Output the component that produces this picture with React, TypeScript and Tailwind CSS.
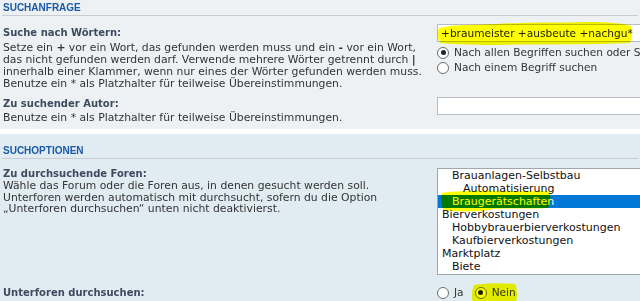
import React from 'react';

const forums = [
  { name: 'Brauanlagen-Selbstbau', level: 1 },
  { name: 'Automatisierung', level: 2 },
  { name: 'Braugerätschaften', level: 1, selected: true },
  { name: 'Bierverkostungen', level: 0 },
  { name: 'Hobbybrauerbierverkostungen', level: 1 },
  { name: 'Kaufbierverkostungen', level: 1 },
  { name: 'Marktplatz', level: 0 },
  { name: 'Biete', level: 1 }
];

const indent = ['pl-[4px]', 'pl-[14px]', 'pl-[25px]'];

const Radio = ({ checked }: { checked?: boolean }) => (
  <span className="relative inline-flex h-[12px] w-[12px] shrink-0 items-center justify-center rounded-full border border-[#6b6b6b] bg-white">
    {checked && <span className="h-[5px] w-[5px] rounded-full bg-[#222]" />}
  </span>
);

const Heading = ({ children }: { children: React.ReactNode }) => (
  <h3 className="mx-[2px] border-b border-[#c9cdd1] pb-[1px] pl-[1px] font-['Liberation_Sans',sans-serif] text-[10px] font-bold uppercase leading-[12px] text-[#1a5aa6]">
    {children}
  </h3>
);

const App = () => {
  return (
    <div className="h-[301px] w-[640px] overflow-hidden bg-[#e1ebf2] font-['DejaVu_Sans',Verdana,sans-serif] text-[#333]">
      {/* Suchanfrage */}
      <div className="h-[129px] bg-[#edf1f4] pt-[2px]">
        <Heading>Suchanfrage</Heading>
        <div className="mt-[11px] flex">
          <div className="w-[437px] shrink-0 whitespace-nowrap pl-[3px] text-[10.8px] leading-[12px]">
            <div className="text-[10px] font-bold text-[#3d4b5f]">Suche nach Wörtern:</div>
            <div className="mt-[3px]">
              Setze ein <b>+</b> vor ein Wort, das gefunden werden muss und ein <b>-</b> vor ein Wort,
              <br />
              das nicht gefunden werden darf. Verwende mehrere Wörter getrennt durch <b>|</b>
              <br />
              innerhalb einer Klammer, wenn nur eines der Wörter gefunden werden muss.
              <br />
              Benutze ein * als Platzhalter für teilweise Übereinstimmungen.
            </div>
          </div>
          <div className="relative -mt-[3px] flex-1 text-[10.6px]">
            <div className="h-[18px] w-[260px] border border-[#b6bcc2] bg-white pl-[3px] leading-[16px] text-[#222]">
              +braumeister +ausbeute +nachgu*
            </div>
            <svg className="pointer-events-none absolute -top-[4px] left-[0px] mix-blend-multiply" width="198" height="26" viewBox="0 0 198 26">
              <path d="M2 8 C 20 4, 40 5, 60 4 C 90 2, 120 3, 150 2 C 170 2, 186 3, 194 6 C 196 12, 195 18, 193 23 C 150 25, 100 24, 60 25 C 30 25, 12 24, 3 23 C 0 18, 0 12, 2 8 Z" fill="#ffff00" />
            </svg>
            <label className="mt-[4px] flex h-[13px] items-center gap-[5px] whitespace-nowrap">
              <Radio checked /> Nach allen Begriffen suchen oder Suchbegriffe wie angegeben verwenden
            </label>
            <label className="mt-[2px] flex h-[13px] items-center gap-[5px] whitespace-nowrap">
              <Radio /> Nach einem Begriff suchen
            </label>
          </div>
        </div>
        <div className="mt-[8px] flex">
          <div className="w-[437px] shrink-0 whitespace-nowrap pl-[3px] text-[10.8px] leading-[12px]">
            <div className="text-[10px] font-bold text-[#3d4b5f]">Zu suchender Autor:</div>
            <div className="mt-[2px]">Benutze ein * als Platzhalter für teilweise Übereinstimmungen.</div>
          </div>
          <div className="-mt-[1px] flex-1">
            <div className="h-[18px] w-[260px] border border-[#b6bcc2] bg-white" />
          </div>
        </div>
      </div>

      <div className="h-[5px] bg-white" />

      {/* Suchoptionen */}
      <div className="bg-[#e1ebf2] pt-[11px]">
        <Heading>Suchoptionen</Heading>
        <div className="mt-[9px] flex">
          <div className="w-[437px] shrink-0 whitespace-nowrap pl-[3px] text-[10.8px] leading-[11.5px]">
            <div className="text-[10px] font-bold leading-[12px] text-[#3d4b5f]">Zu durchsuchende Foren:</div>
            <div>
              Wähle das Forum oder die Foren aus, in denen gesucht werden soll.
              <br />
              Unterforen werden automatisch mit durchsucht, sofern du die Option
              <br />
              „Unterforen durchsuchen“ unten nicht deaktivierst.
            </div>
          </div>
          <div className="relative flex-1 text-[11px]">
            <div className="h-[107px] w-[260px] border border-[#a0a6ac] bg-white text-[#111]">
              {forums.map((f) => (
                <div
                  key={f.name}
                  className={`h-[13px] whitespace-nowrap leading-[13px] ${indent[f.level]} ${
                    f.selected ? 'bg-[#0078d7] text-white' : ''
                  }`}
                >
                  {f.name}
                </div>
              ))}
            </div>
            <svg className="pointer-events-none absolute top-[21px] left-[3px] mix-blend-multiply" width="112" height="24" viewBox="0 0 112 24">
              <path d="M2 4 C 20 1, 50 2, 80 2 C 95 2, 105 1, 110 3 C 111 9, 110 15, 108 19 C 90 20, 70 19, 52 20 C 50 22, 30 23, 4 22 C 1 16, 0 9, 2 4 Z" fill="#ffff00" />
            </svg>
          </div>
        </div>
        <div className="mt-[11px] flex h-[13px] items-center">
          <div className="w-[437px] shrink-0 pl-[3px] text-[10px] font-bold leading-[13px] text-[#3d4b5f]">
            Unterforen durchsuchen:
          </div>
          <div className="relative flex flex-1 items-center gap-[5px] text-[10.6px] leading-[13px]">
            <Radio /> <span>Ja</span>
            <span className="ml-[6px] flex items-center gap-[5px]">
              <Radio checked /> <span>Nein</span>
            </span>
            <svg className="pointer-events-none absolute -top-[4px] left-[34px] mix-blend-multiply" width="48" height="22" viewBox="0 0 48 22">
              <path d="M3 3 C 15 1, 30 1, 44 2 C 47 8, 46 15, 45 21 C 30 22, 15 22, 2 21 C 0 14, 1 8, 3 3 Z" fill="#ffff00" />
            </svg>
          </div>
        </div>
      </div>
    </div>
  );
};

export default App;
